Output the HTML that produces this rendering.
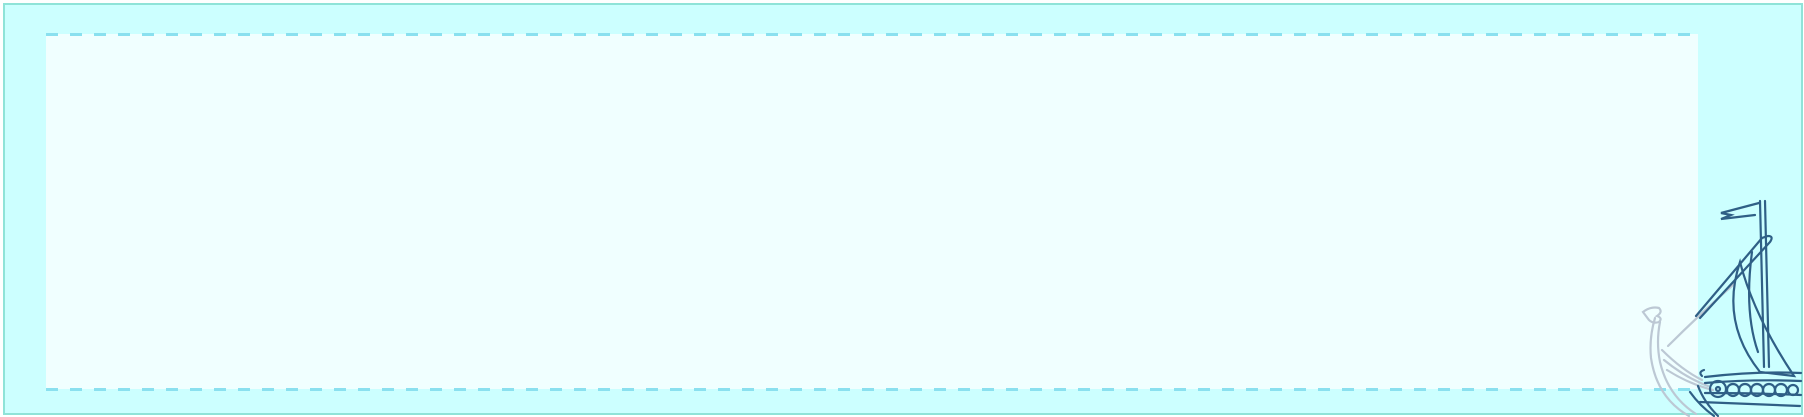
<!DOCTYPE html>
<html><head><meta charset="utf-8"><style>
html,body{margin:0;padding:0;width:1804px;height:417px;background:#fff;overflow:hidden;position:relative}
.outer{position:absolute;left:3px;top:3px;width:1796px;height:408px;background:#ccffff;border:2px solid #8fe3d8}
.inner{position:absolute;left:46px;top:34px;width:1652px;height:355px;background:#f0ffff}
.dash{position:absolute;left:46px;width:1652px;height:3px;background:repeating-linear-gradient(90deg,#8ae0ef 0 12px,transparent 12px 24px)}
svg{position:absolute;left:0;top:0}
</style></head><body>
<div class="outer"></div>
<div class="inner"></div>
<div class="dash" style="top:33px"></div>
<div class="dash" style="top:388px"></div>
<svg width="1804" height="417" viewBox="0 0 1804 417" fill="none" stroke-linecap="round">
<g stroke="#bcc8d4" stroke-width="2.2">
<path d="M1643 312 q8-6 16-4 q4 4 -2 8 q6 2 2 6 q-6 2 -10-2 z"/>
<path d="M1655 318 q-6 20 -4 40 q6 40 38 58"/>
<path d="M1660 322 q-4 20 0 40 q8 34 36 52"/>
<path d="M1662 350 q20 20 40 30 M1664 360 q22 18 44 26 M1667 370 q22 14 46 20"/>
<path d="M1668 346 q30 -30 66 -62"/>
</g>
<g stroke="#2f5f86" stroke-width="2.2">
<path d="M1760 201 l4 166 M1765 201 l4 166"/>
<path d="M1759 203 l-38 10 l10 2 l-10 4 l34-4"/>
<path d="M1700 318 l70-76 q4-6 -2-6 l-6 2 l-66 78"/>
<path d="M1740 262 q-20 60 20 110 l34 4 q-40-60-54-114z"/>
<path d="M1752 252 q-8 60 6 100"/>
<path d="M1705 377 q50 -6 96 -4 M1705 383 q50 -4 96 -2 M1705 393 q50 0 96 2 M1700 402 q50 2 100 4"/>
<path d="M1690 392 q10 14 24 24 M1698 386 q6 16 20 30"/>
<circle cx="1718" cy="389" r="8"/><circle cx="1718" cy="389" r="2"/>
<circle cx="1733" cy="390" r="6"/><circle cx="1745" cy="390" r="6"/><circle cx="1757" cy="390" r="6"/><circle cx="1769" cy="390" r="6"/><circle cx="1781" cy="390" r="6"/><circle cx="1793" cy="390" r="5"/>
<path d="M1702 376 q-4-4 2-6"/>
</g>
</svg>
</body></html>
